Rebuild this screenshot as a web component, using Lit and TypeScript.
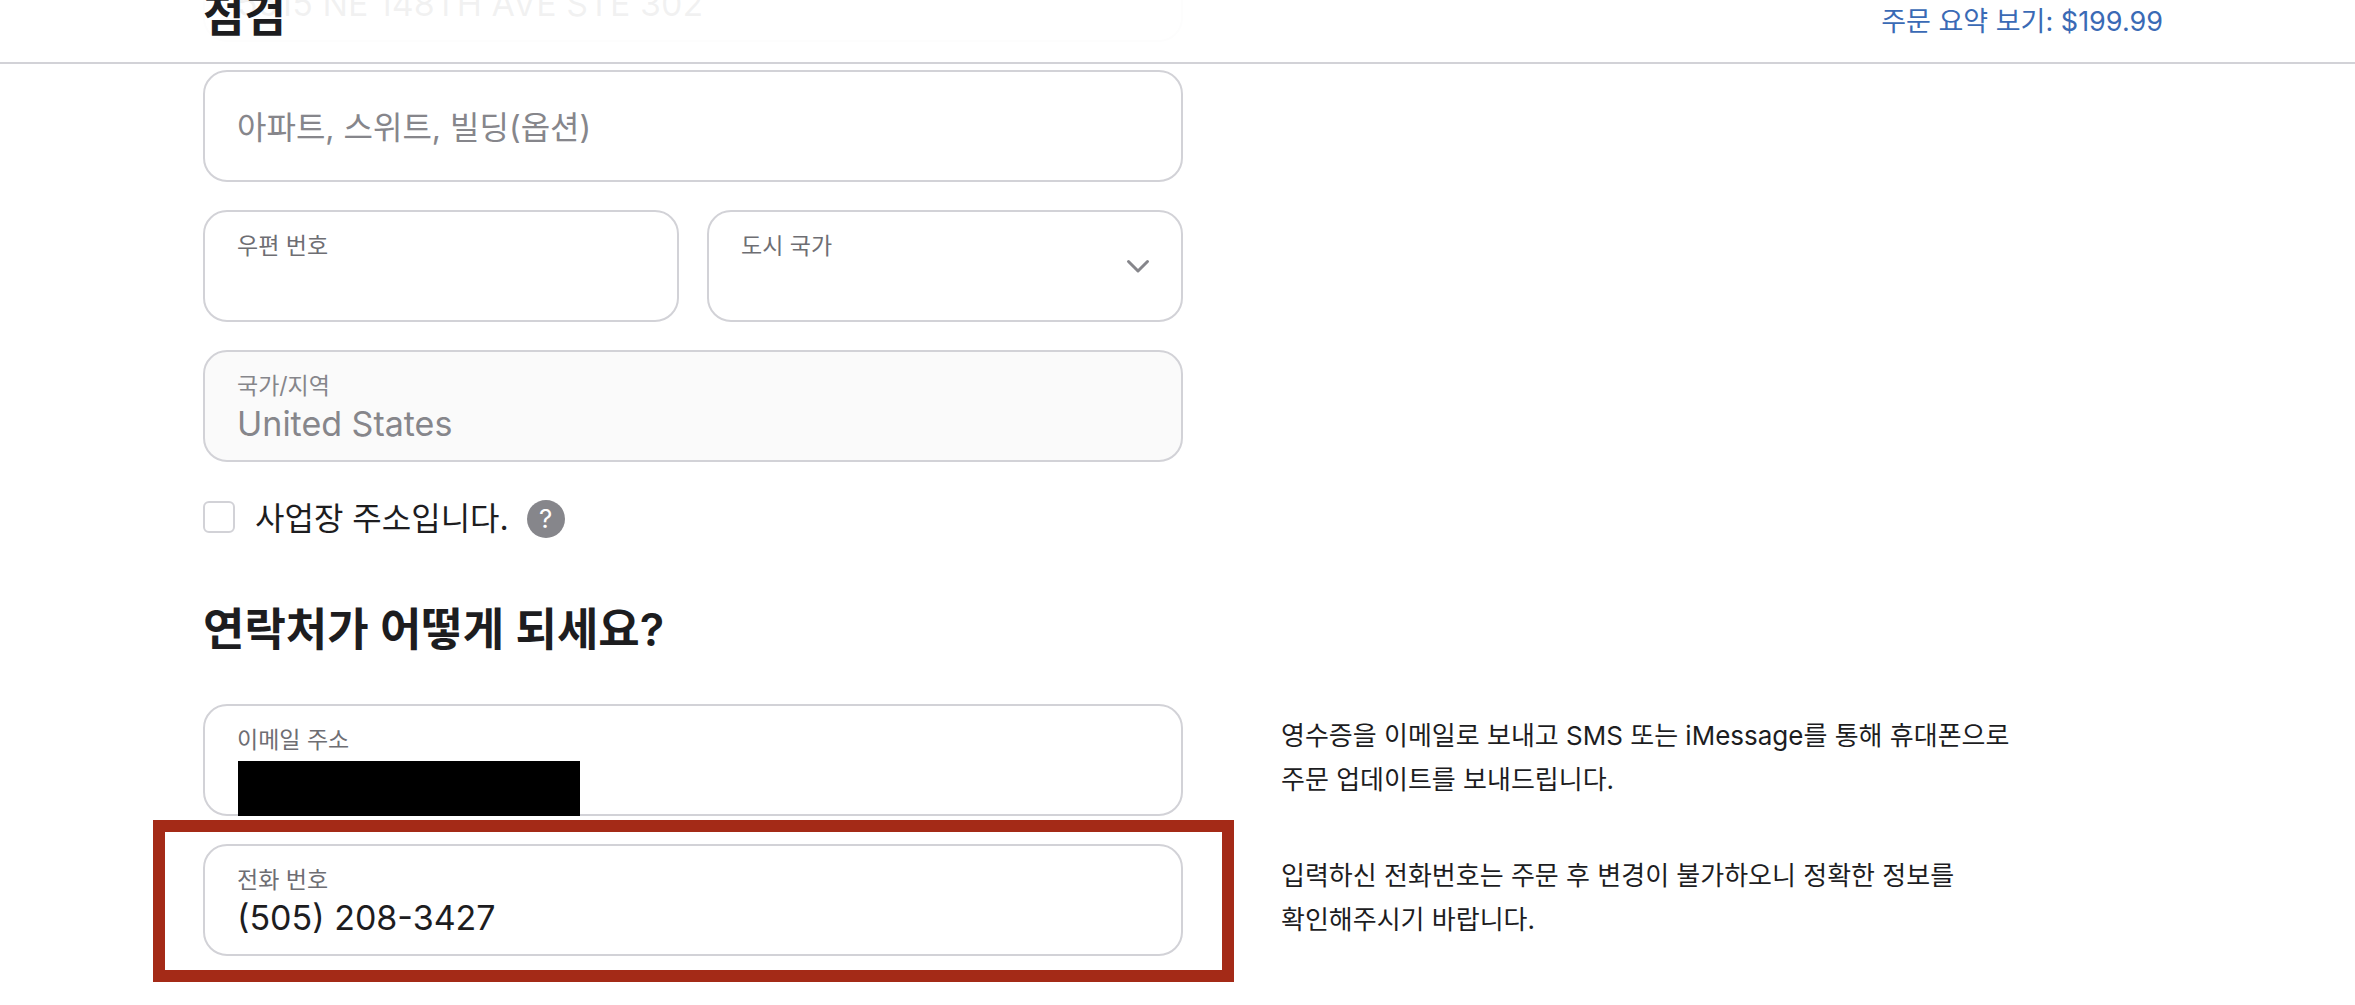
import { LitElement, html, css, nothing } from "lit";
import { customElement, property } from "lit/decorators.js";

const base = css`
  :host {
    display: block;
    font-family: Inter, "Noto Sans CJK KR", sans-serif;
    color: #1d1d1f;
  }
  *, *::before, *::after {
    box-sizing: border-box;
  }
`;

@customElement("form-field")
class FormField extends LitElement {
  @property() label = "";
  @property() value = "";
  @property() type = "text";
  @property() kind: "input" | "select" = "input";
  @property({ type: Boolean }) disabled = false;
  @property({ type: Boolean }) empty = false;
  @property({ type: Boolean }) redacted = false;

  static styles = [
    base,
    css`
      .box {
        position: relative;
        display: flex;
        flex-direction: column;
        height: 112px;
        padding: 16px 32px 0;
        border: 2px solid #d2d2d7;
        border-radius: 24px;
        background: #fff;
      }
      .box.centered {
        justify-content: center;
        padding-top: 4px;
      }
      .box.disabled {
        background: #fafafa;
      }
      .label {
        font-size: 23px;
        line-height: 36px;
        color: #6e6e73;
      }
      .centered .label {
        position: absolute;
        left: 32px;
        font-size: 32px;
        line-height: 44px;
        color: #86868b;
        pointer-events: none;
      }
      .control {
        width: 100%;
        height: 40px;
        margin: 0;
        padding: 0;
        border: 0;
        outline: 0;
        background: transparent;
        appearance: none;
        font: inherit;
        font-size: 34px;
        line-height: 40px;
        color: #1d1d1f;
      }
      .disabled .label,
      .disabled .control {
        color: #86868b;
        opacity: 1;
      }
      .chevron {
        position: absolute;
        right: 31px;
        top: 47px;
        width: 24px;
        height: 16px;
        pointer-events: none;
      }
      .redaction {
        position: absolute;
        left: 33px;
        bottom: -2px;
        width: 342px;
        height: 55px;
        background: #000;
      }
    `,
  ];

  render() {
    const cls = `box ${this.empty ? "centered" : ""} ${this.disabled ? "disabled" : ""}`;
    return html`
      <div class=${cls}>
        <label class="label" for="control">${this.label}</label>
        ${this.kind === "select"
          ? html`<select class="control" id="control"><option></option></select>
              <svg class="chevron" viewBox="0 0 24 16" aria-hidden="true">
                <path d="M2.5 2.5L12 12L21.5 2.5" fill="none" stroke="#86868b" stroke-width="3" stroke-linecap="round" stroke-linejoin="round" />
              </svg>`
          : html`<input class="control" id="control" type=${this.type} .value=${this.value} ?disabled=${this.disabled} />`}
        ${this.redacted ? html`<span class="redaction"></span>` : nothing}
      </div>
    `;
  }
}

@customElement("app-root")
class AppRoot extends LitElement {
  static styles = [
    base,
    css`
      :host {
        min-height: 100vh;
        overflow: hidden;
        background: #fff;
      }
      .bar {
        position: relative;
        z-index: 2;
        display: flex;
        justify-content: space-between;
        align-items: flex-start;
        height: 64px;
        padding: 0 192px 0 203px;
        border-bottom: 2px solid #d2d2d7;
        background: rgba(255, 255, 255, 0.94);
      }
      .title {
        margin: -16px 0 0;
        font-size: 45px;
        line-height: 64px;
        font-weight: 600;
      }
      .summary {
        font-size: 27px;
        line-height: 44px;
        color: #3a6ab5;
        text-decoration: none;
      }
      .page {
        display: flex;
        flex-direction: column;
        gap: 28px;
        margin-top: -134px;
        padding: 0 192px 24px 203px;
      }
      .row {
        display: grid;
        grid-template-columns: minmax(0, 1fr) minmax(0, 1fr);
      }
      .pair {
        display: grid;
        grid-template-columns: 1fr 1fr;
        gap: 28px;
      }
      .check {
        display: flex;
        align-items: center;
        height: 58px;
      }
      .tick {
        appearance: none;
        width: 32px;
        height: 32px;
        margin: 0 20px 4px 0;
        border: 2px solid #d2d2d7;
        border-radius: 6px;
        background: #fff;
      }
      .check-label {
        font-size: 32px;
        line-height: 44px;
      }
      .help {
        width: 38px;
        height: 38px;
        margin-left: 18px;
        padding: 0;
        border: 0;
        border-radius: 50%;
        background: #86868b;
        color: #fff;
        font: 400 26px/38px Inter, sans-serif;
        text-align: center;
      }
      .heading {
        margin: 20px 0 12px;
        font-size: 45px;
        line-height: 68px;
        font-weight: 600;
      }
      .note {
        margin: 0;
        padding: 10px 128px 0 98px;
        font-size: 26px;
        line-height: 44px;
        word-break: keep-all;
      }
      .marked {
        position: relative;
      }
      .marked::after {
        content: "";
        position: absolute;
        inset: -24px -51px -26px -50px;
        border: 12px solid #a42a17;
        pointer-events: none;
      }
    `,
  ];

  render() {
    return html`
      <header class="bar">
        <h1 class="title">점검</h1>
        <a class="summary" href="#summary">주문 요약 보기: $199.99</a>
      </header>
      <main class="page">
        <div class="row"><form-field label="도로명 주소" value="5515 NE 148TH AVE STE 302"></form-field></div>
        <div class="row"><form-field label="아파트, 스위트, 빌딩(옵션)" empty></form-field></div>
        <div class="row">
          <div class="pair">
            <form-field label="우편 번호"></form-field>
            <form-field label="도시 국가" kind="select"></form-field>
          </div>
        </div>
        <div class="row"><form-field label="국가/지역" value="United States" disabled></form-field></div>
        <div class="check">
          <input class="tick" type="checkbox" id="business" />
          <label class="check-label" for="business">사업장 주소입니다.</label>
          <button class="help" type="button" aria-label="도움말">?</button>
        </div>
        <h2 class="heading">연락처가 어떻게 되세요?</h2>
        <div class="row">
          <form-field label="이메일 주소" type="email" redacted></form-field>
          <p class="note">영수증을 이메일로 보내고 SMS 또는 iMessage를 통해 휴대폰으로 주문 업데이트를 보내드립니다.</p>
        </div>
        <div class="row">
          <form-field class="marked" label="전화 번호" type="tel" value="(505) 208-3427"></form-field>
          <p class="note">입력하신 전화번호는 주문 후 변경이 불가하오니 정확한 정보를 확인해주시기 바랍니다.</p>
        </div>
      </main>
    `;
  }
}
